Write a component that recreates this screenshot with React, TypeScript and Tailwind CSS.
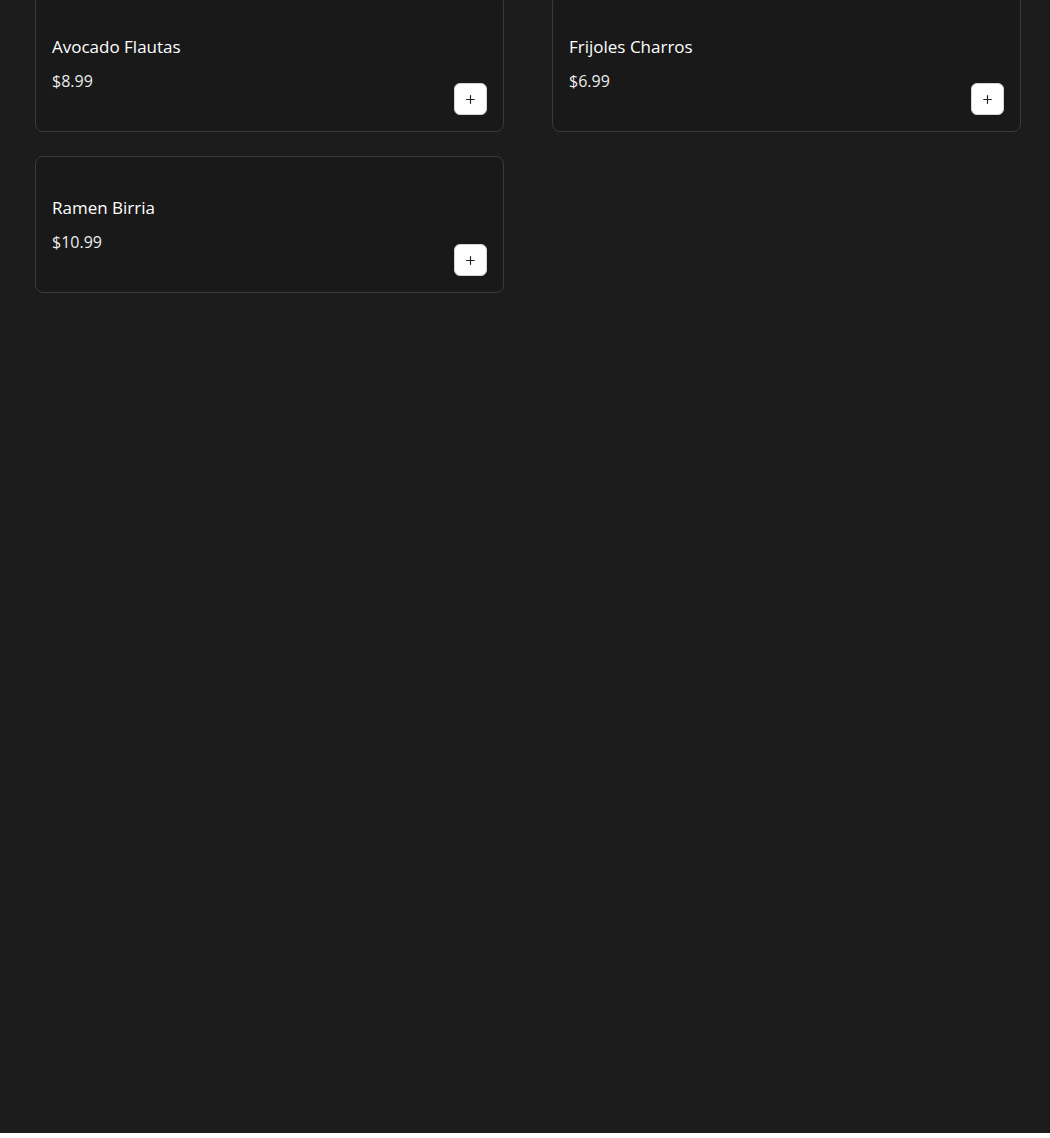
import { Plus } from "lucide-react";

type Dish = {
  name: string;
  price: string;
};

const dishes: Dish[] = [
  { name: "Avocado Flautas", price: "$8.99" },
  { name: "Frijoles Charros", price: "$6.99" },
  { name: "Ramen Birria", price: "$10.99" },
];

const DishCard = ({ dish }: { dish: Dish }) => {
  return (
    <div className="flex items-end justify-between rounded-lg border border-[#3a3a3a] bg-[#191919] p-4">
      <div className="flex flex-col pt-[21px] pb-[22px]">
        <span className="text-[17px] leading-7 font-medium text-white">
          {dish.name}
        </span>
        <span className="mt-2 text-base leading-6 font-normal text-[#ececec]">
          {dish.price}
        </span>
      </div>
      <button className="flex h-8 w-[33px] items-center justify-center rounded-md border border-[#d4d4d4] bg-white text-[#222]">
        <Plus size={13} strokeWidth={2.2} />
      </button>
    </div>
  );
};

const App = () => {
  return (
    <div
      className="min-h-[1138px] bg-[#1c1c1c] pl-[35px] pr-[29px]"
      style={{ fontFamily: '"Open Sans", "Liberation Sans", sans-serif' }}
    >
      <div className="mt-[-5px] grid grid-cols-2 gap-x-12 gap-y-6">
        {dishes.map((dish) => (
          <DishCard key={dish.name} dish={dish} />
        ))}
      </div>
    </div>
  );
};

export default App;
